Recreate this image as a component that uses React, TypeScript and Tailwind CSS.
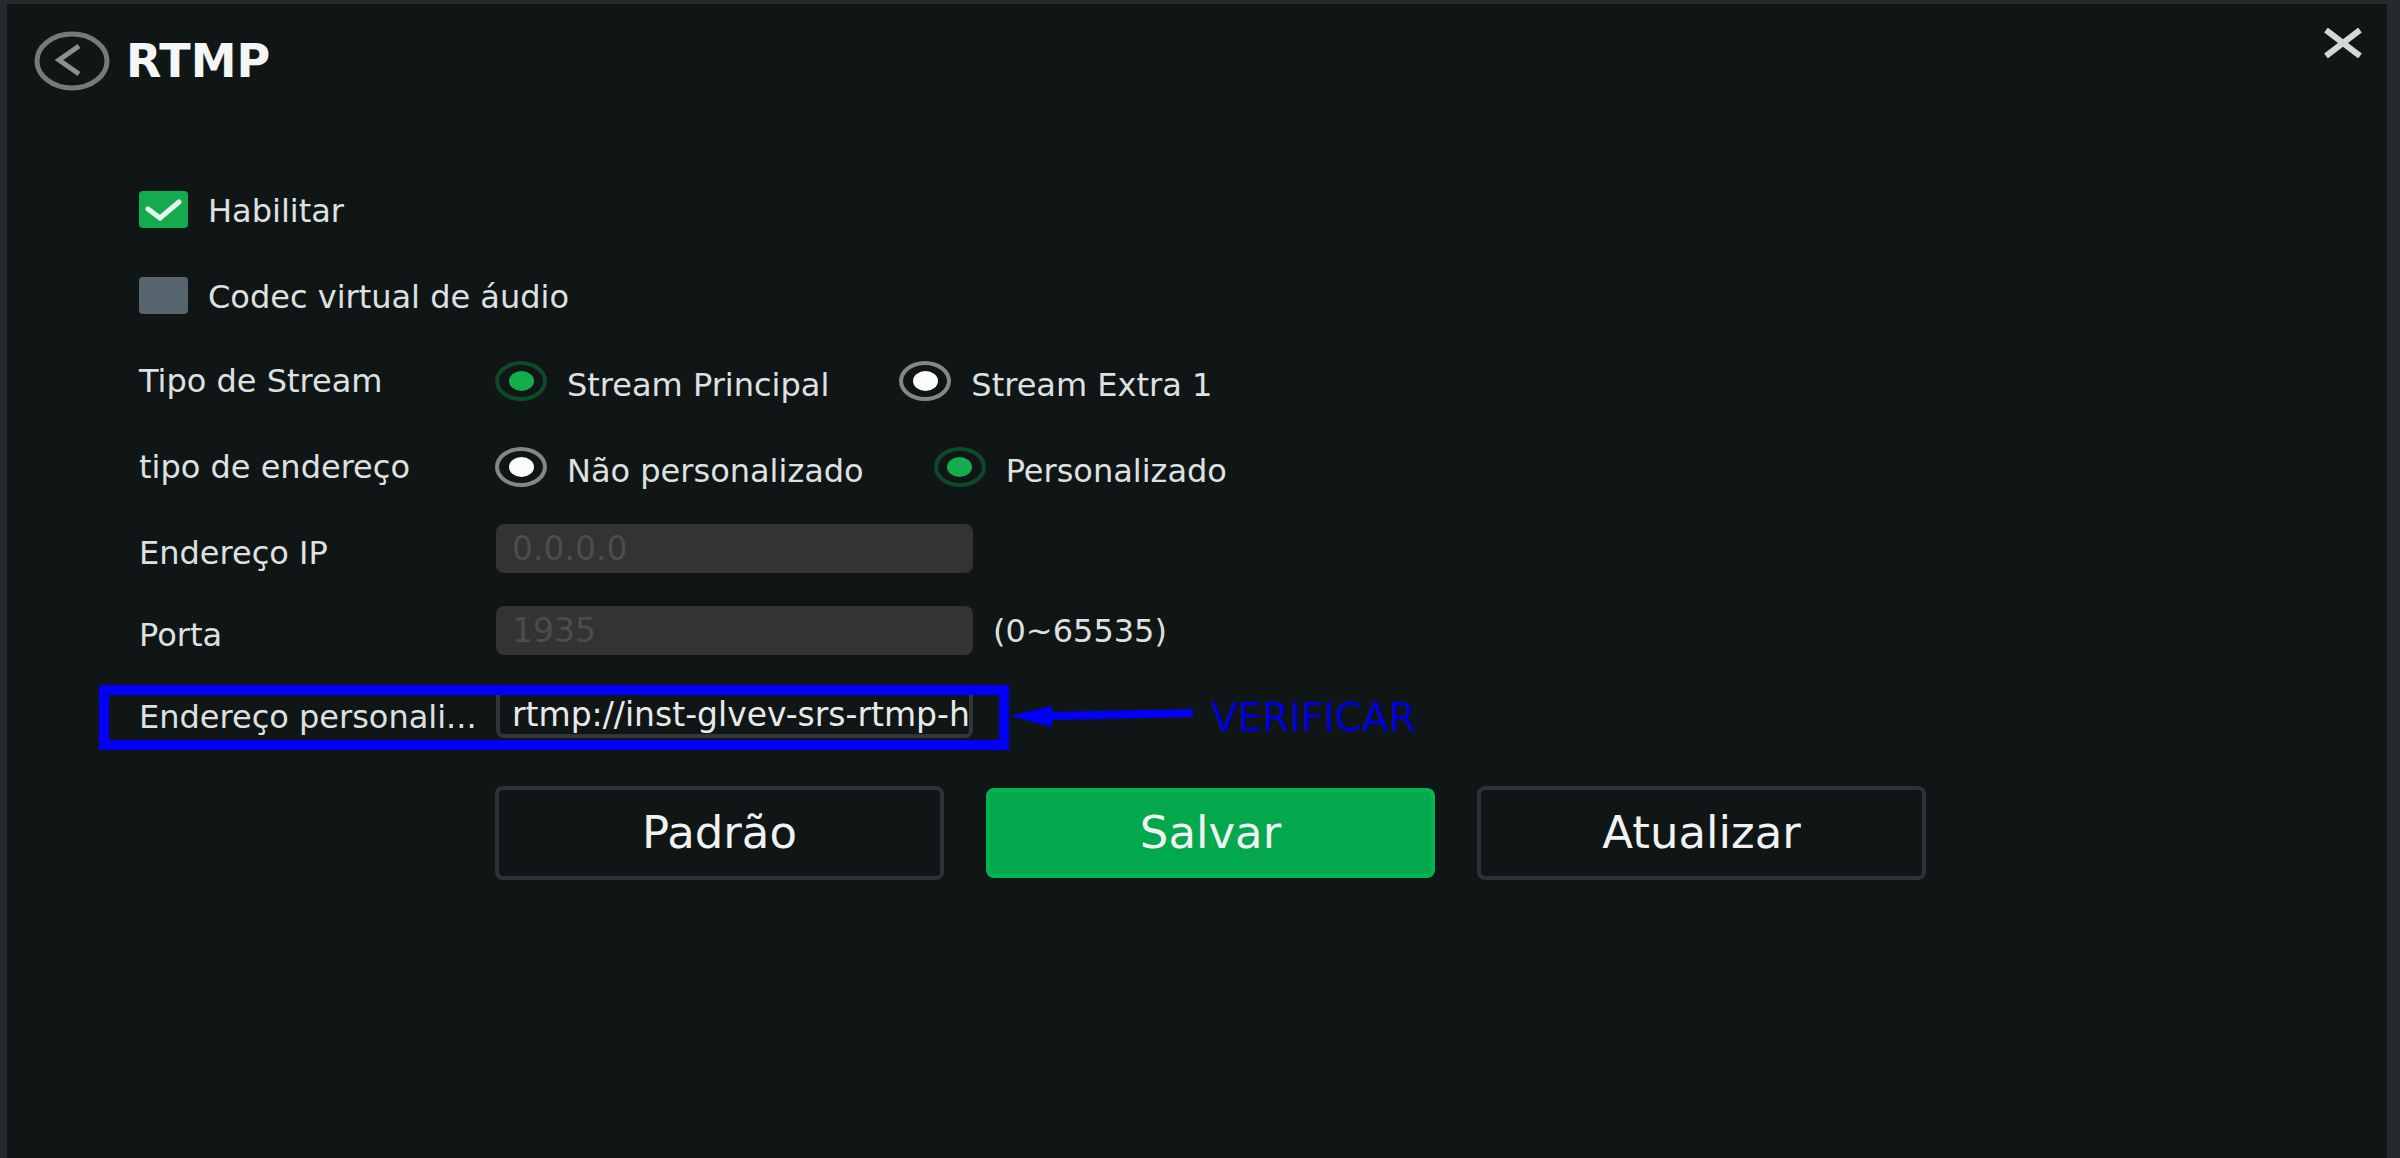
import { useState } from 'react';
import type { ReactNode } from 'react';
import { clsx } from 'clsx';

interface RadioProps {
  name: string;
  label: string;
  checked: boolean;
  onChange: () => void;
}

interface FieldRowProps {
  label: string;
  htmlFor?: string;
  children: ReactNode;
}

const inputStyle = 'h-[49px] w-[477px] rounded-lg bg-[#333333] px-4 text-[33px] text-[#4a4d4d] outline-none';

function CheckOption({ label, initial }: { label: string; initial: boolean }) {
  const [checked, setChecked] = useState(initial);

  return (
    <label className="flex h-[86px] items-center gap-5">
      <span className="grid place-items-center">
        <input
          type="checkbox"
          checked={checked}
          onChange={() => setChecked(!checked)}
          className="col-start-1 row-start-1 h-[37px] w-[49px] appearance-none rounded-sm bg-[#56646d] checked:bg-[#13ab4d]"
        />
        {checked && (
          <svg className="pointer-events-none col-start-1 row-start-1 h-[37px] w-[49px]" viewBox="0 0 49 37" fill="none">
            <path d="M9 18 L21 27 L40 11" stroke="#e8f8ee" strokeWidth="5" strokeLinecap="round" />
          </svg>
        )}
      </span>
      <span className="pt-1">{label}</span>
    </label>
  );
}

function Radio({ name, label, checked, onChange }: RadioProps) {
  return (
    <label className="flex items-center gap-5">
      <input
        type="radio"
        name={name}
        checked={checked}
        onChange={onChange}
        className={clsx(
          'grid h-[40px] w-[52px] appearance-none place-items-center rounded-[50%] border-4',
          'before:h-[20px] before:w-[25px] before:rounded-[50%]',
          checked ? 'border-[#0d4a27] before:bg-[#14ad4e]' : 'border-[#858787] before:bg-[#fbfbfb]'
        )}
      />
      <span className="pt-2">{label}</span>
    </label>
  );
}

function FieldRow({ label, htmlFor, children }: FieldRowProps) {
  return (
    <div className="flex items-center">
      <label htmlFor={htmlFor} className="w-[357px] shrink-0 pt-2">
        {label}
      </label>
      {children}
    </div>
  );
}

export default function App() {
  const [stream, setStream] = useState('main');
  const [address, setAddress] = useState('custom');

  return (
    <div className="min-h-screen bg-[#252b2c] pt-1 pr-[13px] pl-[7px] font-['DejaVu_Sans',sans-serif] text-[32px] leading-[40px] text-[#dfe1e1]">
      <main className="min-h-[1154px] bg-[#101616]">
        {/* Header */}
        <header className="flex h-[162px] items-start justify-between pt-6 pr-6 pl-[27px]">
          <div className="flex items-center gap-4 pt-[3px]">
            <button type="button" aria-label="Voltar">
              <svg className="h-[60px] w-[76px]" viewBox="0 0 76 60" fill="none" stroke="#777a7a">
                <ellipse cx="38" cy="30" rx="35" ry="27" strokeWidth="5" />
                <path d="M45 15 L25 29 L45 43" stroke="#8d8f8f" strokeWidth="5" />
              </svg>
            </button>
            <h1 className="text-[46px] font-bold text-[#f4f5f5]">RTMP</h1>
          </div>
          <button type="button" aria-label="Fechar">
            <svg className="h-[30px] w-[40px]" viewBox="0 0 40 30" fill="none">
              <path d="M3 2 L37 28 M37 2 L3 28" stroke="#d5d7d7" strokeWidth="6" />
            </svg>
          </button>
        </header>

        <form className="pl-[132px]" onSubmit={(e) => e.preventDefault()}>
          <CheckOption label="Habilitar" initial />
          <CheckOption label="Codec virtual de áudio" initial={false} />

          <fieldset className="flex h-[86px] items-center">
            <span className="w-[356px] shrink-0">Tipo de Stream</span>
            <div className="flex gap-[70px]">
              <Radio name="stream" label="Stream Principal" checked={stream === 'main'} onChange={() => setStream('main')} />
              <Radio name="stream" label="Stream Extra 1" checked={stream === 'extra'} onChange={() => setStream('extra')} />
            </div>
          </fieldset>

          <fieldset className="flex h-[86px] items-center">
            <span className="w-[356px] shrink-0">tipo de endereço</span>
            <div className="flex gap-[70px]">
              <Radio name="address" label="Não personalizado" checked={address === 'default'} onChange={() => setAddress('default')} />
              <Radio name="address" label="Personalizado" checked={address === 'custom'} onChange={() => setAddress('custom')} />
            </div>
          </fieldset>

          <div className="flex flex-col gap-[33px] pt-[14px]">
            <FieldRow label="Endereço IP" htmlFor="ip">
              <input id="ip" type="text" disabled defaultValue="0.0.0.0" className={inputStyle} />
            </FieldRow>
            <FieldRow label="Porta" htmlFor="port">
              <input id="port" type="text" disabled defaultValue="1935" className={inputStyle} />
              <span className="pl-5">(0~65535)</span>
            </FieldRow>
          </div>

          {/* Custom address, highlighted */}
          <div className="mt-[30px] -ml-10 flex items-center">
            <div className="flex h-[65px] items-start border-[10px] border-[#0000fa] pr-[26px] pl-[30px]">
              <label htmlFor="url" className="w-[357px] shrink-0 pt-0.5">
                Endereço personali...
              </label>
              <input
                id="url"
                type="text"
                defaultValue="rtmp://inst-glvev-srs-rtmp-h"
                className="h-[43px] w-[477px] rounded-b-lg border-x-4 border-b-4 border-[#2f373a] bg-transparent pl-3 text-[33px] text-[#e8eaea] outline-none"
              />
            </div>
            <svg className="h-[24px] w-[186px]" viewBox="0 0 186 24" fill="none">
              <path d="M40 10 L184 7" stroke="#0000fa" strokeWidth="8" />
              <path d="M1 10 L43 0 V21 Z" fill="#0000fa" />
            </svg>
            <span className="pl-4 text-[39px] text-[#0000d8]">VERIFICAR</span>
          </div>

          {/* Actions */}
          <div className="mt-9 ml-[356px] flex items-center gap-[42px] text-[45px] text-[#f1f2f2]">
            <button type="button" className="h-[94px] w-[449px] rounded-lg border-4 border-[#2b3337]">
              Padrão
            </button>
            <button type="submit" className="h-[90px] w-[449px] rounded-lg border-4 border-[#00b650] bg-[#03a84c]">
              Salvar
            </button>
            <button type="button" className="h-[94px] w-[449px] rounded-lg border-4 border-[#2b3337]">
              Atualizar
            </button>
          </div>
        </form>
      </main>
    </div>
  );
}
